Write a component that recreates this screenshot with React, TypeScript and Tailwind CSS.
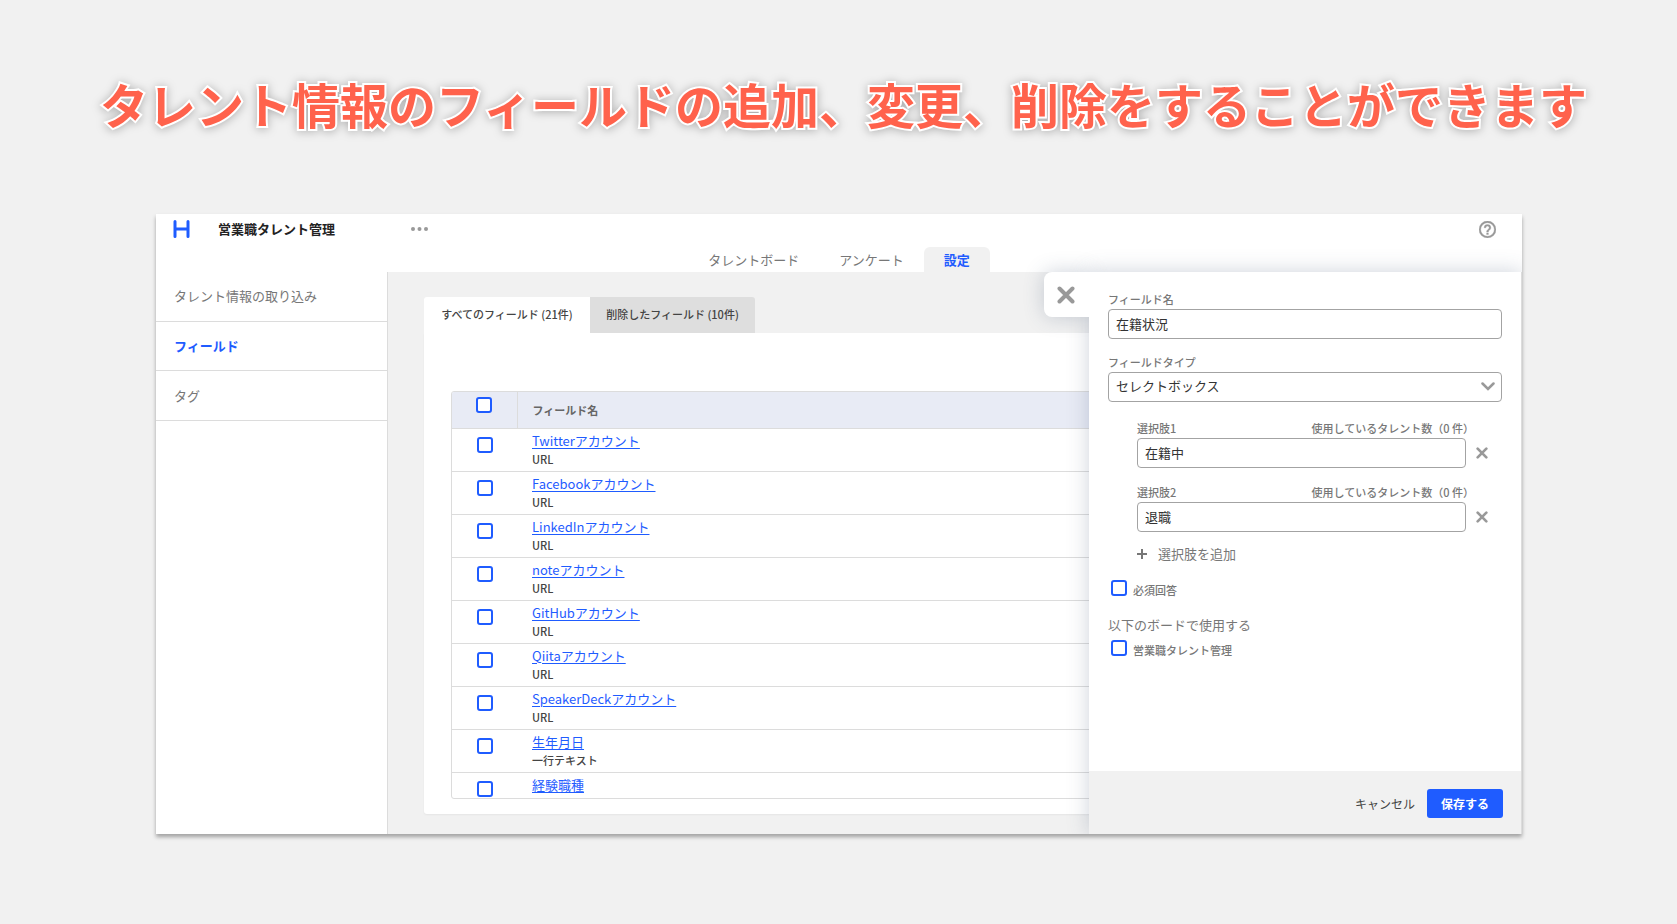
import React, { useState } from 'react';

interface Field {
  name: string;
  type?: string;
}

interface Choice {
  id: number;
  value: string;
  count: number;
}

const fields: Field[] = [
  { name: 'Twitterアカウント', type: 'URL' },
  { name: 'Facebookアカウント', type: 'URL' },
  { name: 'LinkedInアカウント', type: 'URL' },
  { name: 'noteアカウント', type: 'URL' },
  { name: 'GitHubアカウント', type: 'URL' },
  { name: 'Qiitaアカウント', type: 'URL' },
  { name: 'SpeakerDeckアカウント', type: 'URL' },
  { name: '生年月日', type: '一行テキスト' },
  { name: '経験職種' },
];

const checkboxClass =
  'block size-4 shrink-0 appearance-none rounded-[3px] border-2 border-[#1f5cff] bg-white checked:bg-[#1f5cff]';
const inputClass =
  'block h-[30px] w-full rounded-[4px] border border-[#a3a3a3] bg-white px-[7px] pb-0.5 text-[13px] text-[#333]';

const CloseIcon: React.FC<{ className: string; strokeWidth: number }> = ({ className, strokeWidth }) => (
  <svg className={className} viewBox="0 0 18 18" fill="none" stroke="#999" strokeWidth={strokeWidth} strokeLinecap="round">
    <path d="M2.5 2.5l13 13M15.5 2.5l-13 13" />
  </svg>
);

const Header: React.FC = () => (
  <header className="bg-white">
    <div className="flex h-[30px] items-center pr-[26px] pl-[17px]">
      <svg className="h-[18px] w-[17px]" viewBox="0 0 17 18" fill="none" stroke="#1f5cff" strokeWidth="3" strokeLinecap="round">
        <path d="M2 1.5v15M15 1.5v15M2 9h13" />
      </svg>
      <h2 className="ml-7 w-[170px] text-[13px] font-bold text-[#222]">営業職タレント管理</h2>
      <button type="button" aria-label="メニュー" className="ml-[23px]">
        <svg className="h-1 w-[17px]" viewBox="0 0 17 4" fill="#999">
          <circle cx="2" cy="2" r="2" />
          <circle cx="8.5" cy="2" r="2" />
          <circle cx="15" cy="2" r="2" />
        </svg>
      </button>
      <button type="button" aria-label="ヘルプ" className="ml-auto">
        <svg className="size-[17px]" viewBox="0 0 24 24" fill="#999" stroke="#999" strokeWidth="0.5">
          <path d="M12 0a12 12 0 1 0 0 24 12 12 0 0 0 0-24zm0 21.6a9.6 9.6 0 1 1 0-19.2 9.6 9.6 0 0 1 0 19.2zM10.8 16.8h2.4v2.4h-2.4zM12 4.8a4.8 4.8 0 0 0-4.8 4.8h2.4a2.4 2.4 0 1 1 4.8 0c0 2.4-3.6 2.1-3.6 6h2.4c0-2.7 3.6-3 3.6-6A4.8 4.8 0 0 0 12 4.8z" />
        </svg>
      </button>
    </div>
    <nav className="flex h-7 items-end justify-center pt-[3px] text-[13px] text-[#777]">
      <a href="#board" className="flex h-full items-center px-5">タレントボード</a>
      <a href="#survey" className="flex h-full items-center px-5">アンケート</a>
      <a href="#settings" className="flex h-full items-center rounded-t-md bg-[#f1f1f1] px-5 font-bold text-[#1f5cff]">設定</a>
    </nav>
  </header>
);

const Sidebar: React.FC = () => (
  <nav className="w-[232px] shrink-0 border-r border-[#dcdcdc] bg-white text-[13px] text-[#777]">
    <a href="#import" className="flex h-[50px] items-center border-b border-[#dcdcdc] px-[18px] pb-0.5">タレント情報の取り込み</a>
    <a href="#fields" className="flex h-[49px] items-center border-b border-[#dcdcdc] px-[18px] font-bold text-[#1f5cff]">フィールド</a>
    <a href="#tags" className="flex h-[50px] items-center border-b border-[#dcdcdc] px-[18px]">タグ</a>
  </nav>
);

const FieldTable: React.FC = () => (
  <main className="min-w-0 flex-1 bg-[#f1f1f1] pt-[25px] pr-9 pb-5 pl-9">
    <div className="flex text-[11px] font-medium text-[#444]">
      <button type="button" className="h-9 w-[166px] rounded-tl-[3px] bg-white pb-0.5">すべてのフィールド (21件)</button>
      <button type="button" className="h-9 w-[165px] rounded-tr-[3px] bg-[#dedede] pb-0.5">削除したフィールド (10件)</button>
    </div>
    <section className="rounded-b-[3px] bg-white px-[27px] pt-[58px] pb-[15px] shadow-xs">
      <div className="h-[408px] overflow-hidden rounded-[3px] border border-[#dcdcdc]">
        <table className="w-full table-fixed border-collapse text-left">
          <thead>
            <tr className="h-9 border-b border-[#dcdcdc] bg-[#e8ebf5]">
              <th className="w-[65px] border-r border-[#dcdcdc] pt-[5px] align-top">
                <input type="checkbox" aria-label="すべて選択" className={`${checkboxClass} mx-auto`} />
              </th>
              <th className="pl-[15px] text-[11px] font-bold text-[#666]">フィールド名</th>
            </tr>
          </thead>
          <tbody>
            {fields.map((field) => (
              <tr key={field.name} className="h-[43px] border-b border-[#dcdcdc]">
                <td className="pt-2 align-top">
                  <input type="checkbox" aria-label={field.name} className={`${checkboxClass} mx-auto`} />
                </td>
                <td className="pt-0.5 pl-[15px] align-top">
                  <a href="#field" className="block text-[13px] leading-[19px] text-[#1f5cff] underline underline-offset-2">
                    {field.name}
                  </a>
                  {field.type && <p className="text-[11px] leading-[18px] font-medium text-[#444]">{field.type}</p>}
                </td>
              </tr>
            ))}
          </tbody>
        </table>
      </div>
    </section>
  </main>
);

const FieldDrawer: React.FC = () => {
  const [name, setName] = useState('在籍状況');
  const [choices, setChoices] = useState<Choice[]>([
    { id: 1, value: '在籍中', count: 0 },
    { id: 2, value: '退職', count: 0 },
  ]);

  const updateChoice = (id: number, value: string) => {
    setChoices(choices.map((c) => (c.id === id ? { ...c, value } : c)));
  };

  const removeChoice = (id: number) => {
    setChoices(choices.filter((c) => c.id !== id));
  };

  const addChoice = () => {
    setChoices([...choices, { id: Date.now(), value: '', count: 0 }]);
  };

  return (
    <aside className="absolute inset-y-0 right-0 w-[433px] shadow-[0_0_20px_rgba(60,80,110,0.25)]">
      <button
        type="button"
        aria-label="閉じる"
        className="absolute top-0 right-full flex h-[45px] w-[45px] items-center rounded-l-lg bg-white pl-[13px] shadow-[0_0_20px_rgba(60,80,110,0.25)]"
      >
        <CloseIcon className="size-[18px]" strokeWidth={4} />
      </button>
      <form className="relative flex h-full flex-col border-r border-[#dcdcdc] bg-white text-[11px] text-[#777]">
        <div className="flex-1 px-[19px] pt-[19px]">
          <label htmlFor="name" className="block h-[18px] leading-4 font-medium">フィールド名</label>
          <input id="name" value={name} onChange={(e) => setName(e.target.value)} className={inputClass} />

          <label htmlFor="type" className="mt-[15px] block h-[18px] leading-4 font-medium">フィールドタイプ</label>
          <div className="relative">
            <select id="type" className={`${inputClass} appearance-none`}>
              <option>セレクトボックス</option>
              <option>一行テキスト</option>
              <option>URL</option>
            </select>
            <svg className="pointer-events-none absolute top-[10px] right-[7px] h-[9px] w-[14px]" viewBox="0 0 14 9" fill="none" stroke="#999" strokeWidth="2.5" strokeLinecap="round">
              <path d="M1.5 1.5L7 7l5.500-5.500" />
            </svg>
          </div>

          <div className="mt-[18px] pr-[14px] pl-[29px]">
            {choices.map((choice, i) => (
              <div key={choice.id} className="mb-4">
                <div className="mr-[14px] flex h-[18px] justify-between leading-4 font-medium">
                  <label htmlFor={`choice-${choice.id}`}>選択肢{i + 1}</label>
                  <span>使用しているタレント数（{choice.count} 件）</span>
                </div>
                <div className="flex items-center gap-[10px]">
                  <input
                    id={`choice-${choice.id}`}
                    value={choice.value}
                    onChange={(e) => updateChoice(choice.id, e.target.value)}
                    className={inputClass}
                  />
                  <button type="button" aria-label="削除" onClick={() => removeChoice(choice.id)}>
                    <CloseIcon className="size-3" strokeWidth={4} />
                  </button>
                </div>
              </div>
            ))}
            <button type="button" onClick={addChoice} className="-mt-1 flex h-5 items-center gap-[11px] text-[13px]">
              <svg className="size-[10px]" viewBox="0 0 10 10" fill="none" stroke="#777" strokeWidth="2">
                <path d="M5 0v10M0 5h10" />
              </svg>
              選択肢を追加
            </button>
          </div>

          <label className="mt-4 flex items-start gap-[6px] pl-[3px]">
            <input type="checkbox" className={checkboxClass} />
            <span className="mt-0.5 leading-4 font-medium">必須回答</span>
          </label>
          <fieldset className="mt-[15px]">
            <legend className="h-[27px] text-[13px] leading-6">以下のボードで使用する</legend>
            <label className="flex items-start gap-[6px] pl-[3px]">
              <input type="checkbox" className={checkboxClass} />
              <span className="mt-0.5 leading-4 font-medium">営業職タレント管理</span>
            </label>
          </fieldset>
        </div>
        <footer className="flex h-[63px] items-center justify-end gap-3 bg-[#f1f1f1] pt-0.5 pr-[18px] text-[12px]">
          <button type="button" className="text-[#444]">キャンセル</button>
          <button type="button" className="h-[29px] w-[76px] rounded-[3px] bg-[#1f5cff] font-bold text-white">保存する</button>
        </footer>
      </form>
    </aside>
  );
};

const App: React.FC = () => {
  return (
    <div className="min-h-screen bg-[#f1f1f1] pt-[67px] pr-[155px] pb-[90px] pl-39 font-['Noto_Sans_CJK_JP',sans-serif]">
      <h1
        lang="ja"
        className="-mr-20 -ml-[71px] text-center text-[48px] leading-[72px] font-bold whitespace-nowrap text-[#ff624c] [-webkit-text-stroke:4px_#fff] [paint-order:stroke_fill] [filter:drop-shadow(0_1px_5px_rgba(0,0,0,0.28))]"
      >
        タレント情報のフィールドの追加、変更、削除をすることができます
      </h1>
      <div lang="ja" className="mt-[75px] shadow-[0_3px_4px_rgba(0,0,0,0.33)]">
        <div className="overflow-hidden">
          <Header />
          <div className="relative flex">
            <Sidebar />
            <FieldTable />
            <FieldDrawer />
          </div>
        </div>
      </div>
    </div>
  );
};

export default App;
